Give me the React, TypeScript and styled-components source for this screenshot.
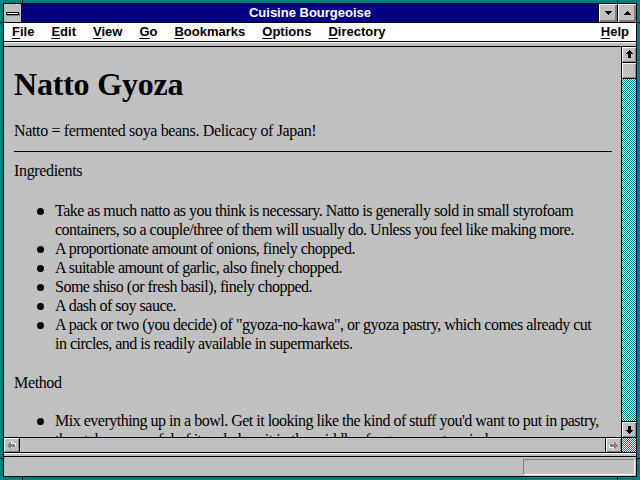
import React from "react";
import styled, { createGlobalStyle } from "styled-components";

const Global = createGlobalStyle`
  html, body { margin: 0; padding: 0; width: 640px; height: 480px; overflow: hidden; background: #008080; }
  * { box-sizing: border-box; }
`;

const Frame = styled.div`
  position: relative;
  width: 640px;
  height: 480px;
  background: #008080;
  padding: 3px;
`;

const Mark = styled.div<{ $x?: number; $y?: number; $vertical?: boolean }>`
  position: absolute;
  background: #000;
  ${(p) =>
    p.$vertical
      ? `left: ${p.$x}px; top: ${p.$y}px; width: 1px; height: 3px;`
      : `left: ${p.$x}px; top: ${p.$y}px; width: 3px; height: 1px;`}
`;

const Window = styled.div`
  height: 100%;
  border: 1px solid #000;
  background: #c0c0c0;
  display: flex;
  flex-direction: column;
  font-family: "Liberation Sans", Arial, sans-serif;
`;

const TitleBar = styled.div`
  flex: none;
  height: 19px;
  display: flex;
  background: #000080;
  border-bottom: 1px solid #000;
`;

const SysMenu = styled.div`
  width: 18px;
  background: #c0c0c0;
  border-right: 1px solid #000;
  display: flex;
  align-items: center;
  justify-content: center;
`;

const SysBar = styled.div`
  width: 13px;
  height: 3px;
  background: #fff;
  border: 1px solid #000;
  box-shadow: 1px 1px 0 #808080;
`;

const Title = styled.div`
  flex: 1;
  text-align: center;
  color: #fff;
  font-weight: bold;
  font-size: 13px;
  line-height: 18px;
`;

const TitleButton = styled.div`
  width: 19px;
  border-left: 1px solid #000;
  background: #c0c0c0;
  box-shadow: inset 1px 1px 0 #fff, inset -1px -1px 0 #808080, inset -2px -2px 0 #808080;
  display: flex;
  align-items: center;
  justify-content: center;
`;

const MenuBar = styled.div`
  flex: none;
  height: 19px;
  display: flex;
  gap: 17px;
  padding: 0 7px 0 8px;
  background: #fff;
  border-bottom: 1px solid #000;
  font-weight: bold;
  font-size: 13px;
  line-height: 18px;
  color: #000;
`;

const MenuItem = styled.span<{ $right?: boolean }>`
  margin-left: ${(p) => (p.$right ? "auto" : "0")};
  white-space: nowrap;
  u {
    text-decoration: underline;
    text-underline-offset: 2px;
    text-decoration-thickness: 1px;
  }
`;

const Strip = styled.div<{ $h: number }>`
  flex: none;
  height: ${(p) => p.$h}px;
  background: #c0c0c0;
  border-top: 1px solid #fff;
  border-bottom: 1px solid #000;
`;

const Main = styled.div`
  flex: none;
  height: 390px;
  display: flex;
`;

const Viewport = styled.div`
  flex: 1;
  overflow: hidden;
  padding: 0 9px 0 10px;
  font-family: "Liberation Serif", "Times New Roman", serif;
  font-size: 16px;
  letter-spacing: -0.35px;
  color: #000;
`;

const Heading = styled.h1`
  margin: 18px 0 0;
  font-size: 32px;
  line-height: 38px;
  font-weight: bold;
  letter-spacing: -0.2px;
`;

const Para = styled.p<{ $top: number }>`
  margin: ${(p) => p.$top}px 0 0;
  line-height: 19px;
`;

const Rule = styled.div`
  margin: 11px 0 0;
  height: 1px;
  background: #000;
`;

const List = styled.ul<{ $top: number }>`
  list-style: none;
  margin: ${(p) => p.$top}px 7px 0 0;
  padding: 0;
  line-height: 19px;
  letter-spacing: -0.5px;
`;

const Item = styled.li`
  display: flex;
  align-items: flex-start;
`;

const Bullet = styled.span`
  flex: none;
  width: 7px;
  height: 7px;
  border-radius: 50%;
  background: #000;
  margin: 7px 11px 0 23px;
`;

const ItemText = styled.span`
  flex: 1;
`;

const VScroll = styled.div`
  width: 15px;
  border-left: 1px solid #000;
  display: flex;
  flex-direction: column;
`;

const bevel = `
  background: #c0c0c0;
  box-shadow: inset 1px 1px 0 #fff, inset -1px -1px 0 #808080;
  display: flex;
  align-items: center;
  justify-content: center;
`;

const VButton = styled.div<{ $edge: "top" | "bottom" }>`
  flex: none;
  height: 16px;
  ${bevel}
  ${(p) => (p.$edge === "top" ? "border-bottom: 1px solid #000;" : "border-top: 1px solid #000;")}
`;

const Dither = styled.div`
  flex: 1;
  background: repeating-conic-gradient(#008080 0% 25%, #ffffff 0% 50%) 0 0 / 2px 2px;
`;

const HScroll = styled.div`
  flex: none;
  height: 16px;
  display: flex;
  border-top: 1px solid #000;
  border-bottom: 1px solid #000;
`;

const HButton = styled.div<{ $side: "left" | "right" }>`
  flex: none;
  width: 16px;
  ${bevel}
  ${(p) => (p.$side === "left" ? "border-right: 1px solid #000;" : "border-left: 1px solid #000;")}
`;

const HTrack = styled.div`
  flex: 1;
  background: #c0c0c0;
`;

const Corner = styled.div`
  flex: none;
  width: 15px;
  border-left: 1px solid #000;
  background: repeating-conic-gradient(#008080 0% 25%, #ffffff 0% 50%) 0 0 / 2px 2px;
`;

const StatusBar = styled.div`
  flex: 1;
  display: flex;
  justify-content: flex-end;
  align-items: flex-end;
  padding: 0 1px 1px 0;
`;

const StatusField = styled.div`
  width: 112px;
  height: 16px;
  border-top: 1px solid #808080;
  border-left: 1px solid #808080;
  border-bottom: 1px solid #fff;
  border-right: 1px solid #fff;
`;

const ARROW = "M3 0h1v1h1v1h1v1h1v1h-2v4h-3v-4h-2v-1h1v-1h1v-1h1z";
const TRI = "M0 0h7v1h-1v1h-1v1h-1v1h-1v-1h-1v-1h-1v-1h-1z";

const Arrow = ({ rotate, disabled }: { rotate: number; disabled?: boolean }) => (
  <svg width="9" height="9" viewBox="0 0 9 9" shapeRendering="crispEdges">
    <g transform={`rotate(${rotate} 4.5 4.5) translate(1 0)`}>
      {disabled && <path d={ARROW} fill="#fff" transform="translate(1 1)" />}
      <path d={ARROW} fill={disabled ? "#808080" : "#000"} />
    </g>
  </svg>
);

const Tri = ({ up }: { up?: boolean }) => (
  <svg width="7" height="4" viewBox="0 0 7 4" shapeRendering="crispEdges">
    <path d={TRI} fill="#000" transform={up ? "rotate(180 3.5 2)" : undefined} />
  </svg>
);

const menus = [
  ["F", "ile"],
  ["E", "dit"],
  ["V", "iew"],
  ["G", "o"],
  ["B", "ookmarks"],
  ["O", "ptions"],
  ["D", "irectory"],
];

const ingredients = [
  "Take as much natto as you think is necessary. Natto is generally sold in small styrofoam containers, so a couple/three of them will usually do. Unless you feel like making more.",
  "A proportionate amount of onions, finely chopped.",
  "A suitable amount of garlic, also finely chopped.",
  "Some shiso (or fresh basil), finely chopped.",
  "A dash of soy sauce.",
  'A pack or two (you decide) of "gyoza-no-kawa", or gyoza pastry, which comes already cut in circles, and is readily available in supermarkets.',
];

const method = [
  "Mix everything up in a bowl. Get it looking like the kind of stuff you'd want to put in pastry, then take a spoonful of it and place it in the middle of a gyoza pastry circle.",
];

export default function App() {
  return (
    <>
      <Global />
      <Frame>
        <Window>
          <TitleBar>
            <SysMenu>
              <SysBar />
            </SysMenu>
            <Title>Cuisine Bourgeoise</Title>
            <TitleButton>
              <Tri />
            </TitleButton>
            <TitleButton>
              <Tri up />
            </TitleButton>
          </TitleBar>
          <MenuBar>
            {menus.map(([a, b]) => (
              <MenuItem key={a + b}>
                <u>{a}</u>
                {b}
              </MenuItem>
            ))}
            <MenuItem $right>
              <u>H</u>elp
            </MenuItem>
          </MenuBar>
          <Strip $h={5} />
          <Main>
            <Viewport>
              <Heading>Natto Gyoza</Heading>
              <Para $top={18}>Natto = fermented soya beans. Delicacy of Japan!</Para>
              <Rule />
              <Para $top={9}>Ingredients</Para>
              <List $top={21}>
                {ingredients.map((t) => (
                  <Item key={t}>
                    <Bullet />
                    <ItemText>{t}</ItemText>
                  </Item>
                ))}
              </List>
              <Para $top={20}>Method</Para>
              <List $top={19}>
                {method.map((t) => (
                  <Item key={t}>
                    <Bullet />
                    <ItemText>{t}</ItemText>
                  </Item>
                ))}
              </List>
            </Viewport>
            <VScroll>
              <VButton $edge="top">
                <Arrow rotate={0} />
              </VButton>
              <VButton $edge="top" />
              <Dither />
              <VButton $edge="bottom">
                <Arrow rotate={180} />
              </VButton>
            </VScroll>
          </Main>
          <HScroll>
            <HButton $side="left">
              <Arrow rotate={-90} disabled />
            </HButton>
            <HTrack />
            <HButton $side="right">
              <Arrow rotate={90} disabled />
            </HButton>
            <Corner />
          </HScroll>
          <Strip $h={4} />
          <StatusBar>
            <StatusField />
          </StatusBar>
        </Window>
        <Mark $vertical $x={22} $y={0} />
        <Mark $vertical $x={617} $y={0} />
        <Mark $vertical $x={22} $y={477} />
        <Mark $vertical $x={617} $y={477} />
        <Mark $x={0} $y={22} />
        <Mark $x={0} $y={458} />
        <Mark $x={637} $y={22} />
        <Mark $x={637} $y={458} />
      </Frame>
    </>
  );
}
